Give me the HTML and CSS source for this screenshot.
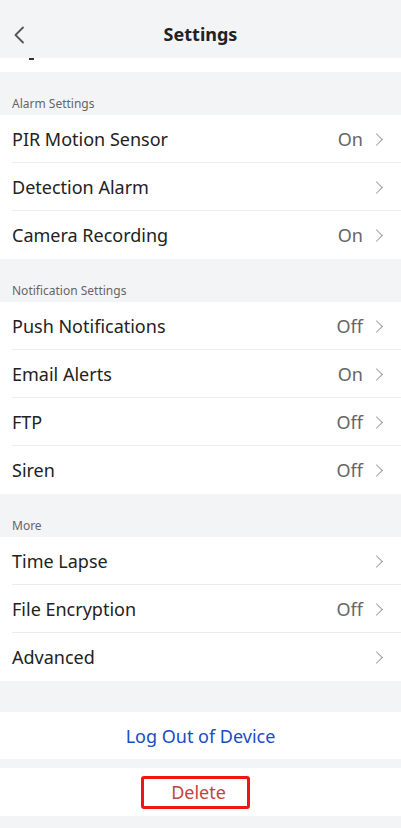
FILE: index.html
```html
<!DOCTYPE html>
<html><head>
<title>Settings</title>
<meta name="viewport" content="width=device-width, initial-scale=1">
<link rel="stylesheet" href="styles.css">
</head><body>
<div class="header">
  <svg class="back" width="12" height="18" viewBox="0 0 12 18"><path d="M10 1.5 L2.5 9 L10 16.5" fill="none" stroke="#555" stroke-width="1.8" stroke-linecap="round" stroke-linejoin="round"/></svg>
  <h1>Settings</h1>
</div>
<div class="clip"><span class="tail"></span></div>

<div class="section">Alarm Settings</div>
<div class="group">
  <div class="row"><span class="label">PIR Motion Sensor</span><span class="value">On</span><i class="chev"></i></div>
  <div class="row"><span class="label">Detection Alarm</span><span class="value"></span><i class="chev"></i></div>
  <div class="row"><span class="label">Camera Recording</span><span class="value">On</span><i class="chev"></i></div>
</div>

<div class="section">Notification Settings</div>
<div class="group">
  <div class="row"><span class="label">Push Notifications</span><span class="value">Off</span><i class="chev"></i></div>
  <div class="row"><span class="label">Email Alerts</span><span class="value">On</span><i class="chev"></i></div>
  <div class="row"><span class="label">FTP</span><span class="value">Off</span><i class="chev"></i></div>
  <div class="row"><span class="label">Siren</span><span class="value">Off</span><i class="chev"></i></div>
</div>

<div class="section">More</div>
<div class="group">
  <div class="row"><span class="label">Time Lapse</span><span class="value"></span><i class="chev"></i></div>
  <div class="row"><span class="label">File Encryption</span><span class="value">Off</span><i class="chev"></i></div>
  <div class="row"><span class="label">Advanced</span><span class="value"></span><i class="chev"></i></div>
</div>

<div class="gap"></div>
<div class="action logout">Log Out of Device</div>
<div class="action delete-row"><span class="delete">Delete</span></div>
</body></html>
```

FILE: styles.css
```css
body { margin: 0; background: #f3f4f6; font-family: "Noto Sans", "Open Sans", sans-serif; color: #222; width: 401px; height: 828px; overflow: hidden; }
.header { height: 58px; box-sizing: border-box; padding-top: 10px; display: flex; align-items: center; justify-content: center; position: relative; }
.header h1 { margin: 0; font-size: 18px; font-weight: 700; color: #222; }
.back { position: absolute; left: 13px; top: 26px; }
.clip { height: 14px; background: #fff; }
.tail { display: block; margin-left: 29px; width: 5px; height: 2px; background: #333; }
.section { height: 43px; box-sizing: border-box; padding: 23px 12px 0; font-size: 12px; color: #666; }
.group { background: #fff; }
.row { height: 48px; display: flex; align-items: center; margin-left: 12px; padding-right: 20px; border-bottom: 1px solid #ececef; box-sizing: border-box; }
.row:last-child { border-bottom: none; }
.label { flex: 1; font-size: 18px; }
.value { font-size: 18px; color: #666; margin-right: 9px; }
.chev { width: 8px; height: 8px; border-top: 1.5px solid #9b99a8; border-right: 1.5px solid #9b99a8; transform: rotate(45deg); margin-top: 1px; }
.gap { height: 31px; }
.action { background: #fff; height: 47px; display: flex; align-items: center; justify-content: center; font-size: 18px; }
.logout { color: #1a4cc2; margin-bottom: 9px; }
.delete-row { height: 48px; }
.delete { display: block; width: 97px; height: 27px; line-height: 27px; padding-left: 6px; margin-right: 10px; text-align: center; border: 3px solid #f01616; border-radius: 3px; color: #c0453f; }
```
